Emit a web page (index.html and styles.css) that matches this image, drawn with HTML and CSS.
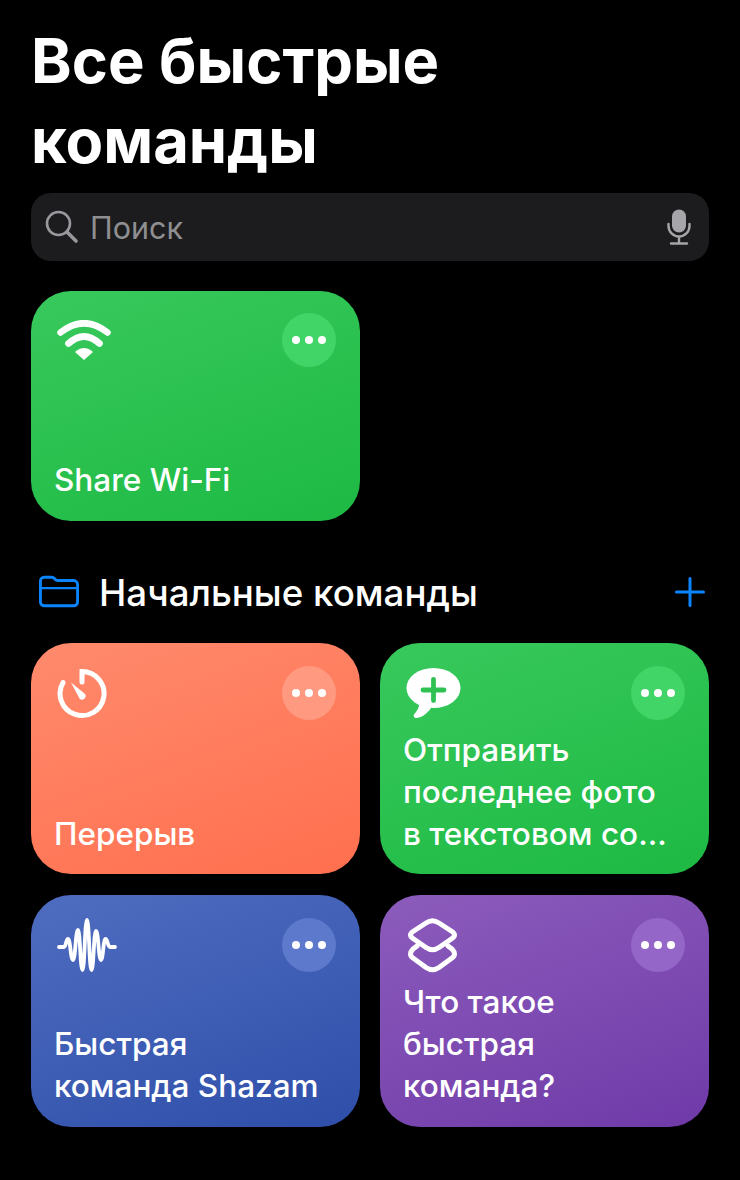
FILE: index.html
```html
<!DOCTYPE html>
<html lang="ru">
  <head>
    <meta charset="utf-8" />
    <title>Все быстрые команды</title>
    <link rel="stylesheet" href="styles.css">
  </head>
  <body>
    <div class="page">
      <h1 class="title">Все быстрые команды</h1>

      <div class="search">
        <svg class="search-icon" width="34" height="34" viewBox="0 0 34 34" fill="none" stroke="#98989e">
          <circle cx="13.5" cy="13.5" r="11.5" stroke-width="2.6" />
          <path d="M22 22l9 9" stroke-width="3.6" stroke-linecap="round" />
        </svg>
        <span class="search-text">Поиск</span>
        <svg class="mic-icon" width="24" height="36" viewBox="0 0 24 36" fill="none" stroke="#a5a5aa">
          <rect x="5" y="0.5" width="14" height="23" rx="7" fill="#a5a5aa" stroke="none" />
          <path d="M1.5 15v2a10.5 10.5 0 0 0 21 0v-2M12 28v6M4 34.5h16" stroke-width="2.4" stroke-linecap="round" />
        </svg>
      </div>

      <div class="grid">
        <div class="card card-first green">
          <div class="card-top">
            <svg class="icon icon-wifi" width="56" height="40" viewBox="0 0 56 40" fill="none" stroke="#fff" stroke-width="6.600" stroke-linecap="round">
              <path d="M4.500 12.500Q28 -6 51.500 12.500" />
              <path d="M12.500 23.500Q28 9.500 43.500 23.500" />
              <path d="M28 40L19 32Q28 24 37 32Z" fill="#fff" stroke="none" />
            </svg>
            <div class="more"><i></i><i></i><i></i></div>
          </div>
          <div class="card-title">Share Wi-Fi</div>
        </div>
      </div>

      <div class="section">
        <svg class="folder" width="40" height="33" viewBox="0 0 42 34" fill="none" stroke="#0a84ff" stroke-width="3">
          <path d="M1.500 6a4 4 0 0 1 4-4h8c2.500 0 3.500 3.500 6 3.500h17a4 4 0 0 1 4 4V28a4 4 0 0 1-4 4h-31a4 4 0 0 1-4-4Z" stroke-linejoin="round" />
          <path d="M1.500 13.500h39" stroke-width="2.500" />
        </svg>
        <span class="section-title">Начальные команды</span>
        <svg class="plus" width="30" height="30" viewBox="0 0 30 30" stroke="#0a84ff" stroke-width="3" stroke-linecap="round">
          <path d="M15 1.500v27M1.500 15h27" />
        </svg>
      </div>

      <div class="grid">
        <div class="card orange">
          <div class="card-top">
            <svg class="icon icon-timer" width="50" height="50" viewBox="0 0 50 50" fill="none" stroke="#fff" stroke-width="5" stroke-linecap="round">
              <path d="M25 13V2.500A22 22 0 1 1 6 13.500" />
              <path d="M14 13.500l13.500 11a3.500 3.500 0 0 1-5 5Z" fill="#fff" stroke="none" />
            </svg>
            <div class="more"><i></i><i></i><i></i></div>
          </div>
          <div class="card-title">Перерыв</div>
        </div>

        <div class="card green">
          <div class="card-top">
            <svg class="icon icon-message" width="56" height="50" viewBox="0 0 56 50">
              <ellipse cx="27.500" cy="20" rx="27" ry="20" fill="#fff" />
              <path d="M13 33C14 39 11 43 8 46.500C7 48 8 50 10 50C15 50 21 46 25 40Z" fill="#fff" />
              <path d="M27.500 11.500v21M17 22h21" stroke="#2fc253" stroke-width="4.800" stroke-linecap="round" />
            </svg>
            <div class="more"><i></i><i></i><i></i></div>
          </div>
          <div class="card-title">Отправить последнее фото в текстовом со...</div>
        </div>

        <div class="card card-tall blue">
          <div class="card-top">
            <svg class="icon icon-wave" width="60" height="56" viewBox="0 0 60 56" fill="none" stroke="#fff" stroke-width="3.800" stroke-linecap="round" stroke-linejoin="round">
              <path d="M2 29H7C9 29 9 21 11 21C13.500 21 13.500 42 16 42C18.500 42 18.500 12 21 12C23.200 12 23.200 52 25.500 52C27.700 52 27.700 2 30 2C32.200 2 32.200 52 34.500 52C36.700 52 36.700 13 39 13C41.500 13 41.500 42 44 42C46.200 42 46.200 21 48.500 21C50.700 21 50.700 29 53 29H58" />
            </svg>
            <div class="more"><i></i><i></i><i></i></div>
          </div>
          <div class="card-title">Быстрая команда Shazam</div>
        </div>

        <div class="card card-tall purple">
          <div class="card-top">
            <svg class="icon icon-stack" width="50" height="56" viewBox="0 0 50 56" fill="none" stroke="#fff" stroke-width="5" stroke-linecap="round" stroke-linejoin="round">
              <path d="M18 5Q24.500 .5 31 5L44 13.500Q49 17 44 20.500L31 29.500Q24.500 34 18 29.500L5 20.500Q0 17 5 13.500Z" />
              <path d="M9 28L5 31Q0 36.500 5 40L18 49.500Q24.500 54 31 49.500L44 40Q49 36.500 44 31L40 28" />
            </svg>
            <div class="more"><i></i><i></i><i></i></div>
          </div>
          <div class="card-title">Что такое быстрая команда?</div>
        </div>
      </div>
    </div>
  </body>
</html>
```

FILE: styles.css
```css
html,
body {
  margin: 0;
  background: #000;
}
body {
  font-family: Inter, "Noto Sans", sans-serif;
  color: #fff;
}
.page {
  width: 740px;
  height: 1180px;
  overflow: hidden;
  box-sizing: border-box;
  padding: 21px 31px 0;
}

.title {
  margin: 0;
  font-size: 61.5px;
  line-height: 80px;
  font-weight: 700;
  width: 500px;
}

.search {
  display: flex;
  align-items: center;
  height: 68px;
  margin-top: 12px;
  padding: 0 18px 0 14px;
  background: #1c1c1e;
  border-radius: 20px;
}
.search-text {
  margin-left: 11px;
  font-size: 30.5px;
  color: #8f8f91;
}
.mic-icon {
  margin-left: auto;
}

.grid {
  display: grid;
  grid-template-columns: 329px 329px;
  gap: 21px 20px;
  margin-top: 30px;
}
.card {
  display: flex;
  flex-direction: column;
  justify-content: space-between;
  height: 231px;
  box-sizing: border-box;
  padding: 23px 24px 19px 23px;
  border-radius: 40px;
}
.card-first {
  height: 230px;
  padding-top: 22px;
  padding-bottom: 20px;
}
.card-tall {
  height: 232px;
  padding-bottom: 20px;
}
.green {
  --more: #40d566;
  background: linear-gradient(160deg, #38c95c, #1db943);
}
.orange {
  --more: #ff9a80;
  background: linear-gradient(160deg, #ff8a6d, #ff6f4e);
}
.blue {
  --more: #5c79cc;
  background: linear-gradient(160deg, #4f6dc0, #2e4ea9);
}
.purple {
  --more: #9466c8;
  background: linear-gradient(160deg, #8c5cbc, #6f3aa8);
}

.card-top {
  display: flex;
  justify-content: space-between;
  align-items: flex-start;
}
.icon-wifi {
  margin: 7px 0 0 2px;
}
.icon-timer {
  margin: 3px 0 0 3px;
}
.icon-message {
  margin: 2px 0 0 3px;
}
.icon-wave {
  margin-left: 3px;
}
.icon-stack {
  margin-left: 5px;
}
.more {
  display: flex;
  align-items: center;
  justify-content: center;
  gap: 5px;
  width: 54px;
  height: 54px;
  border-radius: 50%;
  background: var(--more);
}
.more i {
  width: 8px;
  height: 8px;
  border-radius: 50%;
  background: #fff;
}
.card-title {
  max-width: 272px;
  font-size: 31.5px;
  line-height: 42px;
  font-weight: 500;
}

.section {
  display: flex;
  align-items: center;
  height: 40px;
  margin-top: 51px;
  padding-bottom: 1px;
  padding-left: 8px;
}
.folder {
  margin-bottom: 1px;
}
.section-title {
  margin-left: 20px;
  font-size: 36.7px;
  font-weight: 500;
}
.plus {
  margin-left: auto;
  margin-right: 4px;
}
```
